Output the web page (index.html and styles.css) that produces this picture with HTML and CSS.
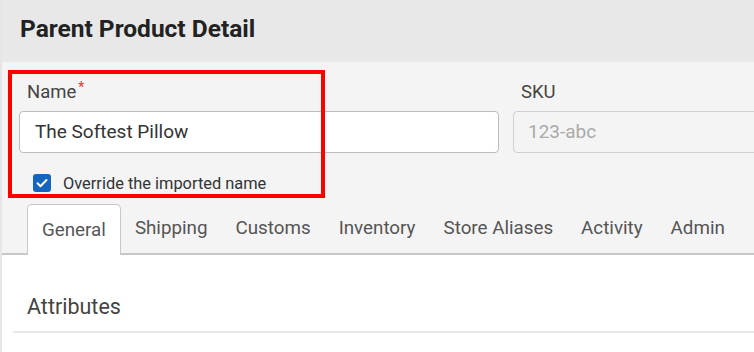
FILE: index.html
```html
<!DOCTYPE html>
<html>
<head>
<meta charset="utf-8">
<link rel="stylesheet" href="styles.css">
</head>
<body>
<div class="page">
  <header class="header">
    <h1 class="title">Parent Product Detail</h1>
  </header>
  <section class="form">
    <div class="row">
      <div class="field name-field">
        <label class="label">Name<span class="req">*</span></label>
        <div class="input">The Softest Pillow</div>
        <div class="check">
          <span class="box"><svg viewBox="0 0 18 18" width="18" height="18"><path d="M4.5 9.3l3 3 6-6.3" fill="none" stroke="#fff" stroke-width="2" stroke-linecap="round" stroke-linejoin="round"/></svg></span>
          <span class="check-label">Override the imported name</span>
        </div>
        <div class="highlight"></div>
      </div>
      <div class="field sku-field">
        <label class="label">SKU</label>
        <div class="input disabled">123-abc</div>
      </div>
    </div>
    <nav class="tabs">
      <div class="tab active">General</div>
      <div class="tab">Shipping</div>
      <div class="tab">Customs</div>
      <div class="tab">Inventory</div>
      <div class="tab">Store Aliases</div>
      <div class="tab">Activity</div>
      <div class="tab">Admin</div>
    </nav>
  </section>
  <section class="content">
    <h2 class="section-title">Attributes</h2>
  </section>
</div>
</body>
</html>
```

FILE: styles.css
```css
* { box-sizing: border-box; }
html, body { margin: 0; padding: 0; }
body {
  font-family: Roboto, "Noto Sans", sans-serif;
  background: #fff;
  width: 754px;
  height: 352px;
  overflow: hidden;
}
.page {
  border-left: 2px solid #e6e6e6;
  min-height: 352px;
}
.header {
  background: #e8e8e8;
  height: 62px;
  padding: 14px 0 0 18px;
}
.title {
  margin: 0;
  font-size: 24.5px;
  font-weight: 700;
  color: #222;
  line-height: 30px;
}
.form {
  background: #f4f4f4;
  padding: 18px 0 0 0;
}
.row {
  display: flex;
  gap: 14px;
  padding-left: 17px;
}
.field { display: flex; flex-direction: column; }
.name-field { width: 480px; position: relative; }
.sku-field { flex: 1; margin-right: -20px; }
.label {
  font-size: 18.5px;
  color: #444;
  line-height: 24px;
  height: 24px;
  padding-left: 8px;
  margin-bottom: 7px;
}
.req { color: #e53935; font-size: 14px; vertical-align: top; position: relative; top: -5px; margin-left: 2px; }
.input {
  height: 42px;
  border: 1px solid #bdbdbd;
  border-radius: 4px;
  background: #fff;
  font-size: 19px;
  color: #333;
  padding: 0 15px;
  line-height: 40px;
}
.input.disabled {
  background: #f4f4f4;
  border-color: #d0d0d0;
  color: #aaa;
  padding-left: 14px;
}
.check {
  display: flex;
  align-items: center;
  gap: 12px;
  margin: 20px 0 0 14px;
  height: 20px;
}
.box {
  width: 18px;
  height: 18px;
  border-radius: 3px;
  background: #1565c0;
  display: flex;
}
.check-label { font-size: 16.4px; color: #333; }
.highlight {
  position: absolute;
  left: -11px;
  top: -10px;
  width: 317px;
  height: 128px;
  border: 4px solid #ff0000;
  pointer-events: none;
}
.tabs {
  display: flex;
  margin-top: 11px;
  padding-left: 25px;
  border-bottom: 2px solid #c8c8c8;
  height: 51px;
}
.tab {
  font-size: 18.8px;
  color: #555;
  padding: 11px 14px 0 14px;
  height: 49px;
  line-height: 26px;
}
.tab.active {
  background: #fff;
  border: 1px solid #c8c8c8;
  border-bottom: none;
  border-radius: 5px 5px 0 0;
  height: 51px;
  margin-bottom: -2px;
  padding: 12px 14px 0 14px;
}
.content {
  background: #fff;
  padding: 38px 0 0 11px;
}
.section-title {
  margin: 0;
  font-size: 21.5px;
  font-weight: 400;
  color: #444;
  padding: 0 0 10px 14px;
  border-bottom: 2px solid #e8e8e8;
  line-height: 28px;
}
```
